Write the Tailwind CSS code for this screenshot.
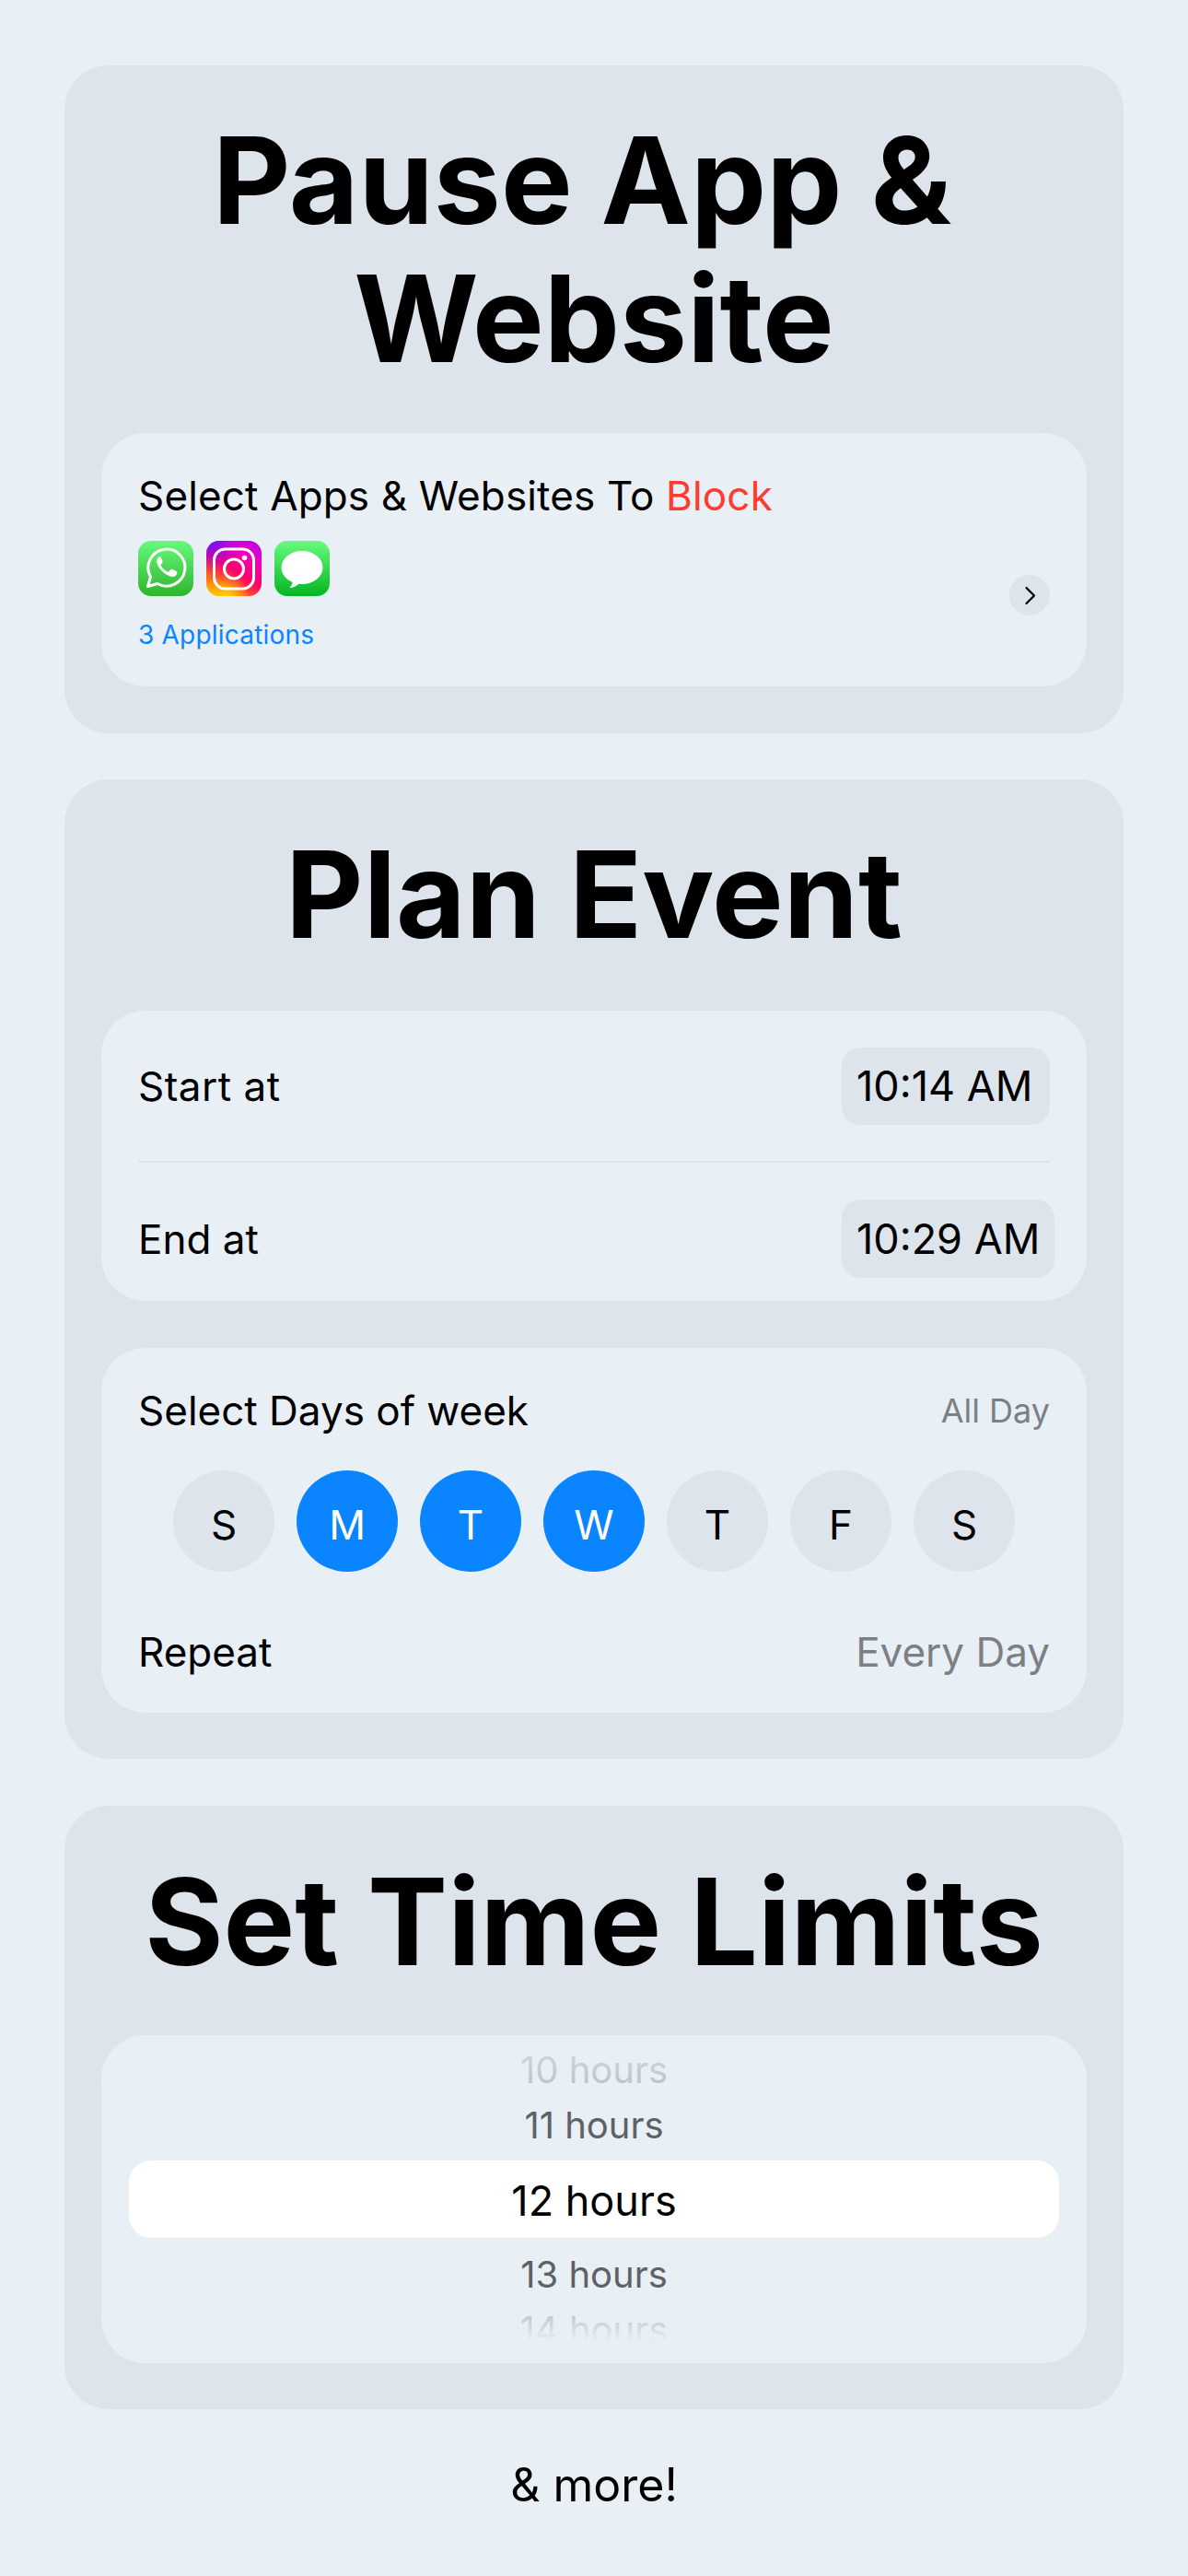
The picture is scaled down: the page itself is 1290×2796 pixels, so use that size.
<!DOCTYPE html>
<html lang="en">
<head>
    <meta charset="UTF-8">
    <meta name="viewport" content="width=device-width, initial-scale=1.0">
    <title>Pause App & Website</title>
    <script src="https://cdn.jsdelivr.net/npm/@tailwindcss/browser@4"></script>
</head>
<body class="bg-[#e8eff5] font-['Inter',sans-serif] text-black">
    <div class="w-[1290px] h-[2796px] overflow-hidden px-[70px] pt-[71px]">

        <!-- Pause app -->
        <section class="bg-[#dde4eb] rounded-[48px] h-[725px] px-[40px] pt-[50px]">
            <h1 class="text-[130.5px] leading-[150px] font-bold text-center h-[349px]"><span class="block pr-[26px]">Pause App &amp;</span>Website</h1>
            <div class="bg-[#e8eff5] rounded-[48px] h-[275px] px-[40px] pt-[42px] flex justify-between">
                <div>
                    <p class="text-[44px] leading-[52px] tracking-[0.15px]">Select Apps &amp; Websites To <span class="text-[#ff3b30]">Block</span></p>
                    <div class="flex gap-[14px] mt-[23px]">
                        <!-- whatsapp -->
                        <svg class="w-[60px] h-[60px]" viewBox="0 0 60 60">
                            <defs><linearGradient id="wa" x1="0" y1="0" x2="0" y2="1"><stop offset="0" stop-color="#67f97c"/><stop offset="1" stop-color="#2fb52c"/></linearGradient></defs>
                            <rect width="60" height="60" rx="14" fill="url(#wa)"/>
                            <path d="M10.500 49.500 L13.500 39 A20 20 0 1 1 21 46.500 Z" fill="none" stroke="#fff" stroke-width="3" stroke-linejoin="round"/>
                            <path d="M22.500 17.500 C20.500 19 19.500 21.500 20.500 24.500 C22.500 30.500 28.500 36.500 35 38.500 C38 39.500 41 38.500 42 36 C42.500 34.500 42.500 33.500 41.500 33 L36.800 30.800 C36 30.500 35.500 30.700 35 31.300 L33.500 33.200 C33 33.700 32.500 33.800 31.800 33.500 C28.800 32.200 26.500 30 24.800 27 C24.500 26.400 24.600 26 25 25.500 L26.300 23.800 C26.700 23.300 26.700 22.800 26.500 22.300 L24.700 17.800 C24.300 17 23.300 17 22.500 17.500 Z" fill="#fff"/>
                        </svg>
                        <!-- instagram -->
                        <svg class="w-[60px] h-[60px]" viewBox="0 0 60 60">
                            <defs>
                                <linearGradient id="ig" x1="0.15" y1="1" x2="0.75" y2="0"><stop offset="0" stop-color="#ffb300"/><stop offset="0.25" stop-color="#ff5a1f"/><stop offset="0.5" stop-color="#ff0068"/><stop offset="0.8" stop-color="#f000c0"/><stop offset="1" stop-color="#c400e0"/></linearGradient>
                                <radialGradient id="igt" cx="0.1" cy="0" r="0.55"><stop offset="0" stop-color="#6a12ff"/><stop offset="1" stop-color="#7a10ff" stop-opacity="0"/></radialGradient>
                                <radialGradient id="igb" cx="0.35" cy="1.05" r="0.45"><stop offset="0" stop-color="#ffd600"/><stop offset="1" stop-color="#ffd600" stop-opacity="0"/></radialGradient>
                            </defs>
                            <rect width="60" height="60" rx="14" fill="url(#ig)"/>
                            <rect width="60" height="60" rx="14" fill="url(#igb)"/>
                            <rect width="60" height="60" rx="14" fill="url(#igt)"/>
                            <rect x="8.500" y="9" width="43" height="43" rx="12" fill="none" stroke="#fff" stroke-width="3"/>
                            <circle cx="30" cy="30.500" r="10.500" fill="none" stroke="#fff" stroke-width="3"/>
                            <circle cx="41.500" cy="18.500" r="2.800" fill="#fff"/>
                        </svg>
                        <!-- messages -->
                        <svg class="w-[60px] h-[60px]" viewBox="0 0 60 60">
                            <defs><linearGradient id="ms" x1="0" y1="0" x2="0" y2="1"><stop offset="0" stop-color="#68fb7e"/><stop offset="1" stop-color="#07b522"/></linearGradient></defs>
                            <rect width="60" height="60" rx="14" fill="url(#ms)"/>
                            <ellipse cx="30" cy="29" rx="22.500" ry="18" fill="#fff"/>
                            <path d="M20 43 C19.800 46 18.500 49 16.500 51 C20 51 24 49.500 27 46 Z" fill="#fff"/>
                        </svg>
                    </div>
                    <p class="text-[#0a84ff] text-[28px] tracking-[0.2px] leading-[34px] mt-[25px]">3 Applications</p>
                </div>
                <div class="w-[44px] h-[44px] mt-[112px] rounded-full bg-[#dde4eb] flex items-center justify-center">
                    <svg class="w-[44px] h-[44px]" viewBox="0 0 44 44" fill="none"><path d="M18.500 14 L27 22.500 L18.500 31" stroke="#000" stroke-width="2.200" stroke-linecap="round" stroke-linejoin="round"/></svg>
                </div>
            </div>
        </section>

        <!-- Plan event -->
        <section class="bg-[#dde4eb] rounded-[48px] h-[1063px] mt-[50px] px-[40px] pt-[50px]">
            <h1 class="text-[130.5px] leading-[150px] font-bold text-center h-[201px]">Plan Event</h1>
            <div class="bg-[#e8eff5] rounded-[48px] h-[315px] px-[40px]">
                <div class="flex justify-between items-center pt-[40px] pb-[39px] border-b-[2px] border-[#dde4eb]">
                    <span class="text-[44px] tracking-[0.5px]">Start at</span>
                    <span class="bg-[#dde4eb] rounded-[20px] h-[84px] w-[226px] flex items-center pl-[16px] text-[45px]">10:14 AM</span>
                </div>
                <div class="flex justify-between items-center pt-[40px] mr-[-5px]">
                    <span class="text-[44px]">End at</span>
                    <span class="bg-[#dde4eb] rounded-[20px] h-[85px] w-[231px] flex items-center pl-[16px] text-[45px]">10:29 AM</span>
                </div>
            </div>
            <div class="bg-[#e8eff5] rounded-[48px] h-[396px] mt-[51px] px-[40px] pt-[42px]">
                <div class="flex justify-between items-center h-[52px]">
                    <span class="text-[44px]">Select Days of week</span>
                    <span class="text-[36px] text-[#7c8084]">All Day</span>
                </div>
                <div class="flex justify-center gap-[24px] mt-[39px]">
                    <span class="w-[110px] h-[110px] pt-[8px] rounded-full bg-[#dde4eb] flex items-center justify-center text-[44px]">S</span>
                    <span class="w-[110px] h-[110px] pt-[8px] rounded-full bg-[#0a84ff] text-white flex items-center justify-center text-[44px]">M</span>
                    <span class="w-[110px] h-[110px] pt-[8px] rounded-full bg-[#0a84ff] text-white flex items-center justify-center text-[44px]">T</span>
                    <span class="w-[110px] h-[110px] pt-[8px] rounded-full bg-[#0a84ff] text-white flex items-center justify-center text-[44px]">W</span>
                    <span class="w-[110px] h-[110px] pt-[8px] rounded-full bg-[#dde4eb] flex items-center justify-center text-[44px]">T</span>
                    <span class="w-[110px] h-[110px] pt-[8px] rounded-full bg-[#dde4eb] flex items-center justify-center text-[44px]">F</span>
                    <span class="w-[110px] h-[110px] pt-[8px] rounded-full bg-[#dde4eb] flex items-center justify-center text-[44px]">S</span>
                </div>
                <div class="flex justify-between items-center h-[52px] mt-[61px]">
                    <span class="text-[44px]">Repeat</span>
                    <span class="text-[44px] text-[#7c8084]">Every Day</span>
                </div>
            </div>
        </section>

        <!-- Time limits -->
        <section class="bg-[#dde4eb] rounded-[48px] h-[655px] mt-[51px] px-[40px] pt-[51px]">
            <h1 class="text-[130.5px] leading-[150px] font-bold text-center h-[198px]">Set Time Limits</h1>
            <div class="bg-[#e8eff5] rounded-[48px] h-[356px] px-[30px] relative text-center text-[40px] overflow-hidden">
                <div class="h-[136px] pt-[8px] text-[#5e6266]">
                    <p class="h-[60px] leading-[60px]">10 hours</p>
                    <p class="h-[60px] leading-[60px]">11 hours</p>
                </div>
                <div class="bg-white rounded-[24px] h-[84px] leading-[87px] text-[45px]">12 hours</div>
                <div class="pt-[10px] text-[#5e6266]">
                    <p class="h-[60px] leading-[60px]">13 hours</p>
                    <p class="h-[60px] leading-[60px]">14 hours</p>
                </div>
                <!-- wheel fade -->
                <div class="absolute top-0 inset-x-0 h-[80px] bg-linear-to-b from-[#e8eff5]/90 via-[#e8eff5]/70 via-65% to-transparent"></div>
                <div class="absolute bottom-0 inset-x-0 h-[80px] bg-linear-to-t from-[#e8eff5] from-30% via-[#e8eff5]/72 via-65% to-transparent"></div>
            </div>
        </section>

        <p class="text-center text-[50px] mt-[45px]">&amp; more!</p>
    </div>
</body>
</html>
